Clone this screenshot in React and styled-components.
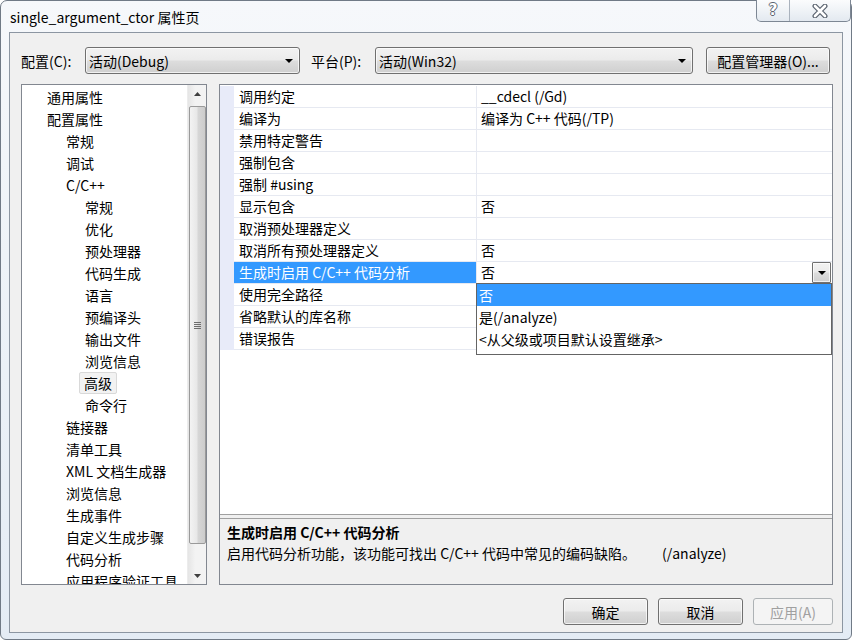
import React from 'react';
import styled, { createGlobalStyle } from 'styled-components';

const GlobalStyle = createGlobalStyle`
  html, body { margin: 0; padding: 0; }
  body {
    width: 852px;
    height: 640px;
    overflow: hidden;
    background: #ffffff;
    font-family: "Noto Sans CJK SC", "Liberation Sans", sans-serif;
    font-size: 14px;
    color: #000;
  }
`;

const treeItems = [
  { label: '通用属性', level: 0 },
  { label: '配置属性', level: 0 },
  { label: '常规', level: 1 },
  { label: '调试', level: 1 },
  { label: 'C/C++', level: 1 },
  { label: '常规', level: 2 },
  { label: '优化', level: 2 },
  { label: '预处理器', level: 2 },
  { label: '代码生成', level: 2 },
  { label: '语言', level: 2 },
  { label: '预编译头', level: 2 },
  { label: '输出文件', level: 2 },
  { label: '浏览信息', level: 2 },
  { label: '高级', level: 2, selected: true },
  { label: '命令行', level: 2 },
  { label: '链接器', level: 1 },
  { label: '清单工具', level: 1 },
  { label: 'XML 文档生成器', level: 1 },
  { label: '浏览信息', level: 1 },
  { label: '生成事件', level: 1 },
  { label: '自定义生成步骤', level: 1 },
  { label: '代码分析', level: 1 },
  { label: '应用程序验证工具', level: 1 },
];

const props = [
  { name: '调用约定', value: '__cdecl (/Gd)' },
  { name: '编译为', value: '编译为 C++ 代码(/TP)' },
  { name: '禁用特定警告', value: '' },
  { name: '强制包含', value: '' },
  { name: '强制 #using', value: '' },
  { name: '显示包含', value: '否' },
  { name: '取消预处理器定义', value: '' },
  { name: '取消所有预处理器定义', value: '否' },
  { name: '生成时启用 C/C++ 代码分析', value: '否', active: true },
  { name: '使用完全路径', value: '' },
  { name: '省略默认的库名称', value: '' },
  { name: '错误报告', value: '' },
];

const options = ['否', '是(/analyze)', '<从父级或项目默认设置继承>'];

const Frame = styled.div`
  width: 852px;
  height: 640px;
  box-sizing: border-box;
  display: flex;
  flex-direction: column;
  padding: 0 8px 6px 8px;
  border: 1px solid #707a86;
  border-radius: 7px 7px 6px 6px;
  background: linear-gradient(180deg, #f6f8fb 0%, #eef3f8 40%, #e4ecf5 100%);
`;

const TitleBar = styled.div`
  height: 31px;
  display: flex;
  align-items: flex-start;
  justify-content: space-between;
`;

const TitleText = styled.div`
  padding: 6px 0 0 1px;
  font-size: 14px;
  line-height: 20px;
  color: #000;
`;

const CaptionGroup = styled.div`
  display: flex;
  margin: -1px -8px 0 0;
  height: 21px;
  border: 1px solid #7d8794;
  border-top: none;
  border-radius: 0 0 5px 5px;
  overflow: hidden;
  background: linear-gradient(180deg, #fbfcfd 0%, #eef2f6 55%, #e3e9f0 100%);
`;

const CaptionButton = styled.div`
  width: ${(p) => p.w}px;
  display: flex;
  align-items: center;
  justify-content: center;
  & + & { border-left: 1px solid #a9b2bd; }
`;

const HelpGlyph = styled.span`
  font-family: "DejaVu Sans", sans-serif;
  font-weight: bold;
  font-size: 15px;
  line-height: 15px;
  color: #ffffff;
  text-shadow: -1px 0 #5b6470, 1px 0 #5b6470, 0 -1px #5b6470, 0 1px #5b6470;
`;

const Client = styled.div`
  flex: 1;
  display: flex;
  flex-direction: column;
  padding: 14px 0 0 11px;
  border: 1px solid #8c96a2;
  background: #f0f0f0;
`;

const TopRow = styled.div`
  height: 27px;
  display: flex;
  align-items: center;
`;

const FieldLabel = styled.label`
  width: 64px;
  line-height: 20px;
`;

const buttonFace = `
  box-sizing: border-box;
  border: 1px solid #707070;
  border-radius: 3px;
  background: linear-gradient(180deg, #f2f2f2 0%, #ebebeb 48%, #dddddd 52%, #cfcfcf 100%);
  box-shadow: inset 0 0 0 1px rgba(255, 255, 255, 0.7);
`;

const Combo = styled.div`
  ${buttonFace}
  width: ${(p) => p.w}px;
  height: 27px;
  margin-right: ${(p) => p.gap || 0}px;
  display: flex;
  align-items: center;
  justify-content: space-between;
  padding: 0 6px 0 3px;
  line-height: 20px;
`;

const Arrow = styled.span`
  width: 0;
  height: 0;
  border-left: 4px solid transparent;
  border-right: 4px solid transparent;
  border-top: 4px solid #000;
`;

const PushButton = styled.div`
  ${buttonFace}
  width: ${(p) => p.w}px;
  height: 27px;
  display: flex;
  align-items: center;
  justify-content: center;
  line-height: 20px;
  color: ${(p) => (p.disabled ? '#a0a0a0' : '#000')};
  ${(p) =>
    p.disabled &&
    `border-color: #adb2b5; background: #f4f4f4; box-shadow: none;`}
`;

const MainRow = styled.div`
  margin-top: 10px;
  height: 501px;
  display: flex;
  gap: 12px;
`;

const Tree = styled.div`
  width: 186px;
  box-sizing: border-box;
  border: 1px solid #828790;
  background: #fff;
  display: flex;
`;

const TreeList = styled.div`
  flex: 1;
  overflow: hidden;
  padding-top: 1px;
`;

const TreeRow = styled.div`
  height: 22px;
  line-height: 22px;
  white-space: nowrap;
  padding-left: ${(p) => 24 + p.level * 19}px;
`;

const TreeLabel = styled.span`
  display: inline-block;
  line-height: 20px;
  margin-left: ${(p) => (p.selected ? -5 : 0)}px;
  padding: 0 ${(p) => (p.selected ? 4 : 0)}px;
  border: 1px solid ${(p) => (p.selected ? '#d9d9d9' : 'transparent')};
  border-radius: 2px;
  background: ${(p) => (p.selected ? '#f2f2f2' : 'transparent')};
`;

const ScrollBar = styled.div`
  width: 18px;
  display: flex;
  flex-direction: column;
  align-items: center;
  background: linear-gradient(90deg, #e5e5e5 0%, #f3f3f3 40%, #f3f3f3 100%);
  border-left: 1px solid #ececec;
`;

const ScrollArrow = styled.div`
  height: 17px;
  width: 100%;
  display: flex;
  align-items: center;
  justify-content: center;
`;

const Thumb = styled.div`
  box-sizing: border-box;
  margin-top: 4px;
  width: 17px;
  height: 438px;
  border: 1px solid #9a9a9a;
  border-radius: 2px;
  background: linear-gradient(90deg, #f3f3f3 0%, #e8e8e8 45%, #d6d6d6 55%, #cccccc 100%);
  display: flex;
  align-items: center;
  justify-content: center;
`;

const Spacer = styled.div`
  flex: 1;
`;

const Panel = styled.div`
  width: 614px;
  box-sizing: border-box;
  border: 1px solid #828790;
  display: flex;
  flex-direction: column;
  background: #f0f0f0;
`;

const Grid = styled.div`
  height: 430px;
  box-sizing: border-box;
  padding-top: 1px;
  background: #fff;
  border-bottom: 1px solid #a0a0a0;
`;

const GridRow = styled.div`
  position: relative;
  display: flex;
  height: 22px;
`;

const Gutter = styled.div`
  width: 14px;
  background: #e8ebf9;
`;

const NameCell = styled.div`
  width: 243px;
  box-sizing: border-box;
  padding-left: 5px;
  line-height: 21px;
  white-space: nowrap;
  border-bottom: 1px solid #e6e9f1;
  border-right: 1px solid #e6e9f1;
  background: ${(p) => (p.active ? '#3399ff' : '#fff')};
  color: ${(p) => (p.active ? '#fff' : '#000')};
`;

const ValueCell = styled.div`
  flex: 1;
  display: flex;
  justify-content: space-between;
  padding-left: 4px;
  line-height: 21px;
  white-space: nowrap;
  border-bottom: 1px solid #e6e9f1;
`;

const DropButton = styled.div`
  ${buttonFace}
  border-radius: 1px;
  width: 19px;
  height: 21px;
  margin-right: 1px;
  display: flex;
  align-items: center;
  justify-content: center;
`;

const DropList = styled.div`
  position: absolute;
  top: 21px;
  left: 256px;
  right: 0;
  z-index: 2;
  box-sizing: border-box;
  height: 72px;
  border: 1px solid #646464;
  background: #fff;
`;

const DropItem = styled.div`
  height: 22px;
  line-height: 22px;
  padding-left: 2px;
  background: ${(p) => (p.hot ? '#3399ff' : 'transparent')};
  color: ${(p) => (p.hot ? '#fff' : '#000')};
`;

const Desc = styled.div`
  margin-top: 3px;
  flex: 1;
  border-top: 1px solid #a0a0a0;
  padding: 3px 0 0 7px;
  line-height: 21px;
`;

const DescTitle = styled.div`
  font-weight: bold;
`;

const Switch = styled.span`
  margin-left: 26px;
`;

const ButtonRow = styled.div`
  margin-top: 13px;
  width: 812px;
  display: flex;
  justify-content: flex-end;
  gap: 10px;
`;

function App() {
  return (
    <Frame>
      <GlobalStyle />
      <TitleBar>
        <TitleText>single_argument_ctor 属性页</TitleText>
        <CaptionGroup>
          <CaptionButton w={32}>
            <HelpGlyph>?</HelpGlyph>
          </CaptionButton>
          <CaptionButton w={60}>
            <svg width="16" height="14" viewBox="0 0 16 14">
              <path d="M3 2 L13 12 M13 2 L3 12" stroke="#5b6470" strokeWidth="5" strokeLinecap="round" />
              <path d="M3 2 L13 12 M13 2 L3 12" stroke="#ffffff" strokeWidth="2.6" strokeLinecap="round" />
            </svg>
          </CaptionButton>
        </CaptionGroup>
      </TitleBar>

      <Client>
        <TopRow>
          <FieldLabel>配置(C):</FieldLabel>
          <Combo w={215} gap={11}>
            <span>活动(Debug)</span>
            <Arrow />
          </Combo>
          <FieldLabel>平台(P):</FieldLabel>
          <Combo w={318} gap={13}>
            <span>活动(Win32)</span>
            <Arrow />
          </Combo>
          <PushButton w={124}>配置管理器(O)...</PushButton>
        </TopRow>

        <MainRow>
          <Tree>
            <TreeList>
              {treeItems.map((t, i) => (
                <TreeRow key={i} level={t.level}>
                  <TreeLabel selected={t.selected}>{t.label}</TreeLabel>
                </TreeRow>
              ))}
            </TreeList>
            <ScrollBar>
              <ScrollArrow>
                <svg width="7" height="4" viewBox="0 0 7 4">
                  <path d="M0 4 L3.5 0 L7 4 Z" fill="#404040" />
                </svg>
              </ScrollArrow>
              <Thumb>
                <svg width="7" height="8" viewBox="0 0 7 8">
                  <path d="M0 1.5 H7 M0 3.5 H7 M0 5.5 H7 M0 7.5 H7" stroke="#6e6e6e" strokeWidth="1" />
                </svg>
              </Thumb>
              <Spacer />
              <ScrollArrow>
                <svg width="7" height="4" viewBox="0 0 7 4">
                  <path d="M0 0 L3.5 4 L7 0 Z" fill="#404040" />
                </svg>
              </ScrollArrow>
            </ScrollBar>
          </Tree>

          <Panel>
            <Grid>
              {props.map((p, i) => (
                <GridRow key={i}>
                  <Gutter />
                  <NameCell active={p.active}>{p.name}</NameCell>
                  <ValueCell>
                    <span>{p.value}</span>
                    {p.active && (
                      <DropButton>
                        <Arrow />
                      </DropButton>
                    )}
                  </ValueCell>
                  {p.active && (
                    <DropList>
                      {options.map((o, j) => (
                        <DropItem key={j} hot={j === 0}>
                          {o}
                        </DropItem>
                      ))}
                    </DropList>
                  )}
                </GridRow>
              ))}
            </Grid>
            <Desc>
              <DescTitle>生成时启用 C/C++ 代码分析</DescTitle>
              <div>
                启用代码分析功能，该功能可找出 C/C++ 代码中常见的编码缺陷。
                <Switch>(/analyze)</Switch>
              </div>
            </Desc>
          </Panel>
        </MainRow>

        <ButtonRow>
          <PushButton w={85}>确定</PushButton>
          <PushButton w={85}>取消</PushButton>
          <PushButton w={80} disabled>
            应用(A)
          </PushButton>
        </ButtonRow>
      </Client>
    </Frame>
  );
}

export default App;
